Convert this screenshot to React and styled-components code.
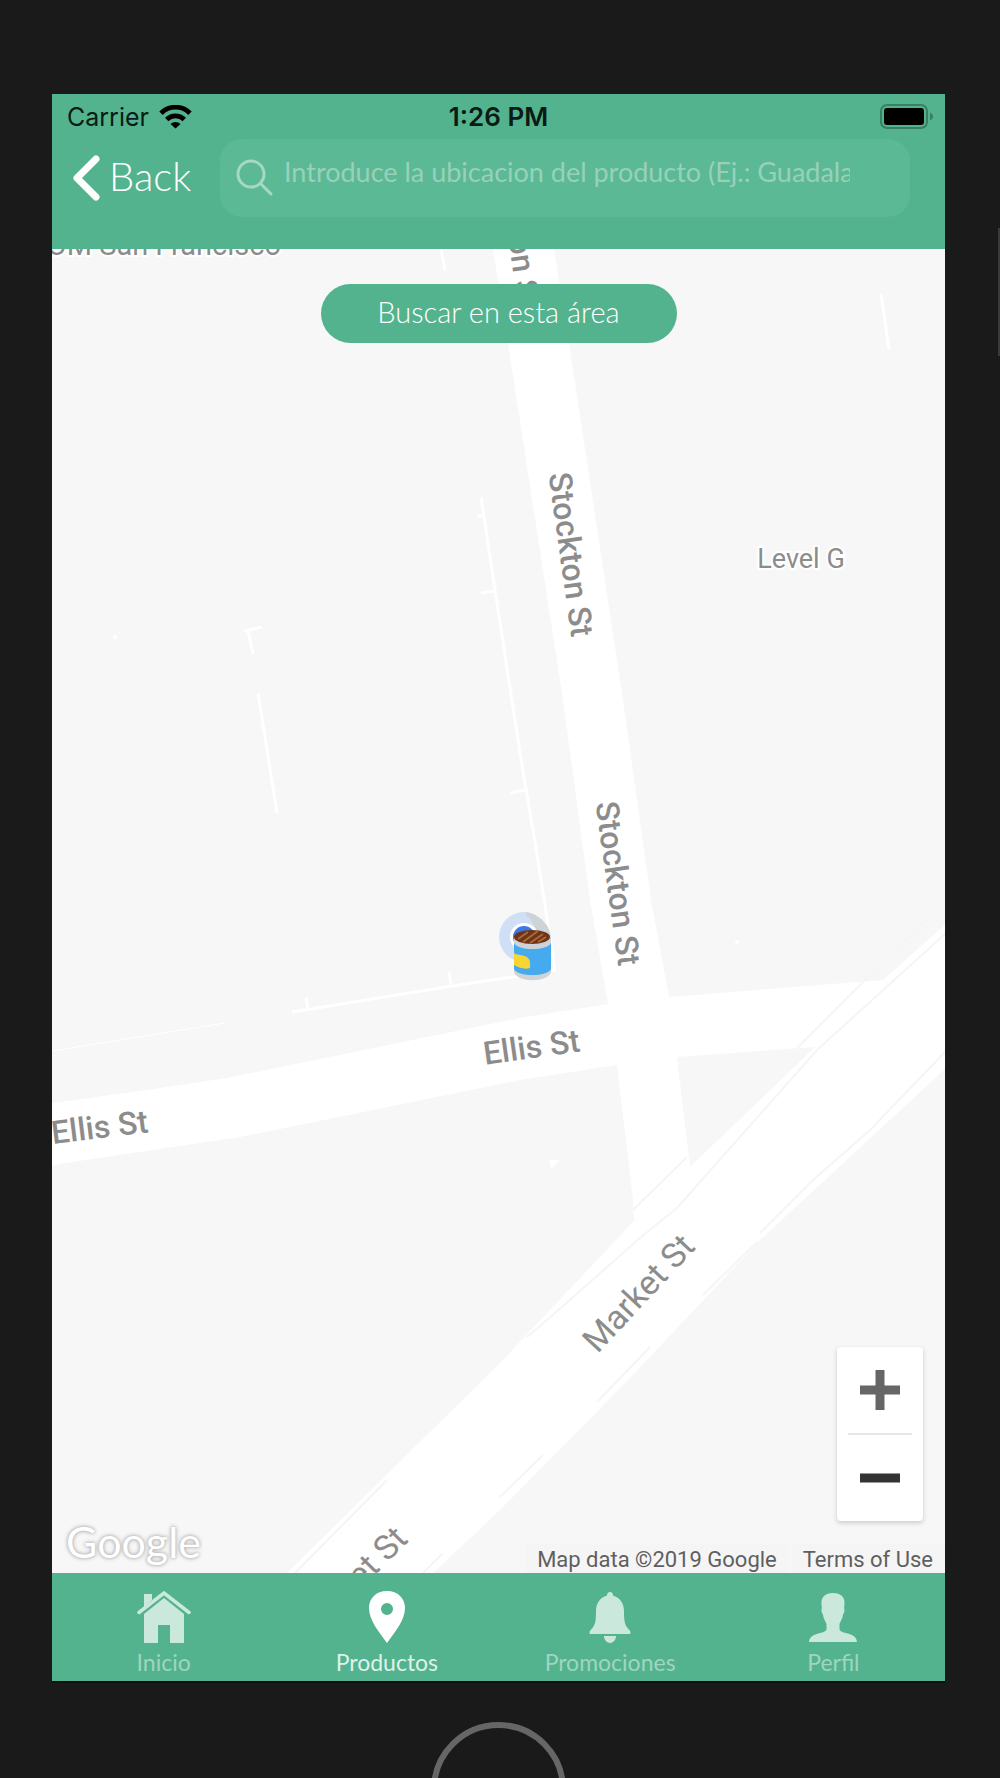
import React, { useState } from 'react';
import styled, { createGlobalStyle, ThemeProvider } from 'styled-components';

const theme = {
  colors: {
    primary: '#52b38e',
    field: '#5cb995',
    placeholder: '#98d1bb',
    soft: '#cbe8dc',
    muted: '#a0d5c0',
    bezel: '#1a1a1a',
    land: '#f7f7f7',
    label: '#8c8c8c',
  },
  fonts: {
    app: 'Lato, "Open Sans", sans-serif',
    system: 'Inter, "Liberation Sans", sans-serif',
    map: 'Roboto, "Liberation Sans", sans-serif',
  },
};

const TABS = [
  { id: 'inicio', label: 'Inicio', icon: HomeIcon },
  { id: 'productos', label: 'Productos', icon: PinIcon },
  { id: 'promociones', label: 'Promociones', icon: BellIcon },
  { id: 'perfil', label: 'Perfil', icon: PersonIcon },
];

function HomeIcon() {
  return (
    <svg width="54" height="54" viewBox="0 0 54 54" fill="currentColor">
      <path d="M2 22.500 27 3l25 19.500" fill="none" stroke="currentColor" strokeWidth="3.500" strokeLinecap="round" />
      <path d="M7 4h8v6l-8 7z" />
      <path d="M27 8 47 24v29H33V35H21v18H7V24z" />
    </svg>
  );
}

function PinIcon() {
  return (
    <svg width="54" height="54" viewBox="0 0 54 54" fill="currentColor">
      <path
        fillRule="evenodd"
        d="M27 1C16 1 9 8.500 9 18c0 12 10 24 18 35 8-11 18-23 18-35C45 8.500 38 1 27 1zm0 12a6 6 0 1 1 0 12 6 6 0 0 1 0-12z"
      />
    </svg>
  );
}

function BellIcon() {
  return (
    <svg width="54" height="54" viewBox="0 0 54 54" fill="currentColor">
      <path d="M27 2c2 0 3 1.500 3 3.500 7 2 11 8 11 15.500 0 11 1 14 4 17.500 1.500 1.700 2.500 2.500 2.500 4 0 1-.5 1.500-1.500 1.500H8c-1 0-1.500-.5-1.500-1.500 0-1.500 1-2.300 2.500-4 3-3.500 4-6.500 4-17.500C13 13.500 17 7.500 24 5.500 24 3.500 25 2 27 2z" />
      <path d="M21 46h12c0 4-3 7-6 7s-6-3-6-7z" />
    </svg>
  );
}

function PersonIcon() {
  return (
    <svg width="54" height="54" viewBox="0 0 54 54" fill="currentColor">
      <path d="M27 3c8 0 12 4 11.500 11 0 2-.3 3-.5 4 1 1 .5 5-1 6.500-.5 5-3.500 8-3.500 10v5c1 3 6 3 11 5 4 1.500 6 3.500 6.500 7.500H3c.5-4 2.500-6 6.500-7.500 5-2 10-2 11-5v-5c0-2-3-5-3.500-10-1.500-1.500-2-5.500-1-6.500-.2-1-.5-2-.5-4C15 7 19 3 27 3z" />
    </svg>
  );
}

function WifiIcon() {
  return (
    <svg width="33" height="24" viewBox="0 0 33 24" fill="none" stroke="#000" strokeWidth="4.800">
      <path d="M2 8.200a20.500 20.500 0 0 1 29 0" />
      <path d="M7.700 14.500a12.500 12.500 0 0 1 17.600 0" />
      <path d="M16.500 23.500l-5-4.500a7.200 7.200 0 0 1 10 0z" fill="#000" stroke="none" />
    </svg>
  );
}

function BatteryIcon() {
  return (
    <svg width="54" height="25" viewBox="0 0 54 25">
      <rect x="1" y="1" width="46" height="23" rx="6" fill="none" stroke="#3a8065" strokeWidth="2" />
      <rect x="4" y="4" width="40" height="17" rx="3" fill="#000" />
      <path d="M50 8.500c4 1.500 4 6.500 0 8z" fill="#3a8065" />
    </svg>
  );
}

function MapDrawing() {
  return (
    <MapSvg viewBox="52 249 893 1324" preserveAspectRatio="xMidYMid slice">
      {/* streets */}
      <g fill="#fff">
        <path d="M493 249H554L569 343 623 700 651 900 669 997 677 1057 690 1167 634 1221 633 1200 617 1065 608 1004 590 900 563 700 508 343z" />
        <path d="M52 1103L140 1091 227 1078 520 1018 608 1004 669 997 883 980 945 925V1040L815 1047 677 1057 617 1065 520 1080 427 1099 240 1137 52 1165z" />
        <path d="M945 925V1069L760 1240 630 1378 500 1510 433 1573H287L500 1363 634 1221 690 1167 815 1047 883 980z" />
      </g>
      {/* kerb lines */}
      <g fill="none" stroke="#f5f5f5" strokeWidth="2">
        <path d="M945 934L817 1050 677 1208 640 1238 547 1320 527 1337" />
        <path d="M938 908L862 983 797 1048M687 1157L633 1210" />
        <path d="M945 1052L870 1130 813 1180 760 1233M757 1242L703 1295M650 1347L597 1402M543 1455L500 1497M443 1553L423 1573" />
        <path d="M387 1480L295 1573" />
      </g>
      {/* building outlines */}
      <g fill="none" stroke="#fff" strokeWidth="3">
        <path d="M481 497L495 590 520 753 538 860 555 970 512 977 440 988 292 1012" />
        <path d="M477 516h7M481 593l14-2M510 793l15-3M449 972l2 13M306 997l2 12" />
        <path d="M244 631l18-4M248 631l5 23M258 693l19 120" />
        <path d="M881 294l8 55M441 249l4 22" />
        <path d="M52 1051l173-28" strokeWidth="1" />
      </g>
      <path d="M549 1160l11 0-9 9z" fill="#fff" />
      <circle cx="115" cy="637" r="2" fill="#fff" />
      <circle cx="737" cy="942" r="2" fill="#fff" />

      <StreetName x="281" y="255" fontSize="29" weight={400} anchor="end">OM San Francisco</StreetName>
      <StreetName transform="translate(507 229) rotate(82)">Stockton St</StreetName>
      <StreetName transform="translate(560 556) rotate(82)">Stockton St</StreetName>
      <StreetName transform="translate(607 885) rotate(82)">Stockton St</StreetName>
      <StreetName transform="translate(533 1058) rotate(-8)">Ellis St</StreetName>
      <StreetName transform="translate(101 1138) rotate(-7)">Ellis St</StreetName>
      <StreetName transform="translate(647 1301) rotate(-47)" fontSize="34" weight={400}>Market St</StreetName>
      <StreetName transform="translate(358 1592) rotate(-45)" fontSize="34" weight={400}>Market St</StreetName>
      <StreetName x="801" y="568" fontSize="27" weight={400}>Level G</StreetName>

      {/* current position */}
      <circle cx="524" cy="937" r="25" fill="#cfdff6" />
      <circle cx="524" cy="937" r="14" fill="#fff" />
      <circle cx="524" cy="937" r="11" fill="#3b78e7" />

      {/* product can */}
      <path d="M526 912c12 2 25 13 25 26l-9 2-12-22c-3-1-5-4-4-6z" fill="#ced3d6" />
      <path d="M514 938v34c3 11 34 11 37 0v-34z" fill="#cdd3d7" />
      <path d="M514 943v26c4 8 33 8 37 0v-26c-4 8-33 8-37 0z" fill="#45abee" />
      <path d="M514 953c4 3 10 1 14 5 3 3 2 8 2 10-6 2-12-1-16-3z" fill="#f8d533" />
      <ellipse cx="532" cy="937" rx="18" ry="7" fill="#6f3417" />
      <path d="M518 939l10-7M523 942l15-11M530 943l13-9M538 942l8-5" stroke="#a8693c" strokeWidth="2" />
    </MapSvg>
  );
}

const App = () => {
  const [tab, setTab] = useState('productos');
  const [query, setQuery] = useState('');

  return (
    <ThemeProvider theme={theme}>
      <GlobalStyle />
      <Phone>
        <Screen>
          <Header>
            <StatusBar>
              <Carrier>Carrier <WifiIcon /></Carrier>
              <Clock>1:26 PM</Clock>
              <Battery><BatteryIcon /></Battery>
            </StatusBar>
            <SearchRow>
              <BackButton>
                <svg width="28" height="48" viewBox="0 0 28 48" fill="none" stroke="currentColor" strokeWidth="7" strokeLinecap="round" strokeLinejoin="round">
                  <path d="M24 5 5 24l19 19" />
                </svg>
                <span>Back</span>
              </BackButton>
              <SearchField>
                <svg width="38" height="38" viewBox="0 0 38 38" fill="none" stroke="currentColor" strokeWidth="3" strokeLinecap="round">
                  <circle cx="15" cy="15" r="13" />
                  <path d="M25 25l10 10" />
                </svg>
                <SearchInput
                  type="text"
                  aria-label="Ubicacion"
                  placeholder="Introduce la ubicacion del producto (Ej.: Guadalajara)"
                  value={query}
                  onChange={e => setQuery(e.target.value)}
                />
              </SearchField>
            </SearchRow>
          </Header>

          <MapArea>
            <MapDrawing />
            <AreaButton>Buscar en esta área</AreaButton>
            <ZoomControl>
              <ZoomButton aria-label="+" $tone="#666">
                <svg width="40" height="40" viewBox="0 0 40 40" stroke="currentColor" strokeWidth="9">
                  <path d="M0 20h40M20 0v40" />
                </svg>
              </ZoomButton>
              <ZoomDivider />
              <ZoomButton aria-label="-" $tone="#333">
                <svg width="40" height="40" viewBox="0 0 40 40" stroke="currentColor" strokeWidth="9">
                  <path d="M0 20h40" />
                </svg>
              </ZoomButton>
            </ZoomControl>
            <MapFooter>
              <GoogleMark>Google</GoogleMark>
              <Credits>
                <span>Map data ©2019 Google</span>
                <a href="#terms">Terms of Use</a>
              </Credits>
            </MapFooter>
          </MapArea>

          <TabBar>
            {TABS.map(({ id, label, icon: Icon }) => (
              <TabButton key={id} $active={tab === id} onClick={() => setTab(id)}>
                <Icon />
                <span>{label}</span>
              </TabButton>
            ))}
          </TabBar>
        </Screen>
        <Chin>
          <HomeButton aria-label="Home" />
        </Chin>
      </Phone>
    </ThemeProvider>
  );
};

export default App;

// Map label, centred on its own point so it can be rotated in place
const StreetName = ({ weight = 500, anchor = 'middle', fontSize = 32, children, ...rest }) => (
  <MapText fontSize={fontSize} fontWeight={weight} textAnchor={anchor} {...rest}>
    {children}
  </MapText>
);

// Styled Components
const GlobalStyle = createGlobalStyle`
  * {
    box-sizing: border-box;
  }

  body {
    margin: 0;
    background: ${({ theme }) => theme.colors.bezel};
  }

  button, input {
    font: inherit;
    color: inherit;
    border: 0;
    margin: 0;
    padding: 0;
    background: none;
  }

  button {
    cursor: pointer;
  }

  svg {
    display: block;
    flex: none;
  }
`;

const Phone = styled.div`
  position: relative;
  display: flex;
  flex-direction: column;
  height: 100vh;
  min-height: 900px;
  padding: 94px 55px 0 52px;
  overflow: hidden;
  background: ${({ theme }) => theme.colors.bezel};
  font-family: ${({ theme }) => theme.fonts.app};

  &::after {
    content: '';
    position: absolute;
    top: 228px;
    right: 0;
    width: 2px;
    height: 128px;
    background: #3a3a3a;
  }
`;

const Screen = styled.div`
  flex: 1;
  display: flex;
  flex-direction: column;
  box-shadow: 0 2px 0 #0c120f;
`;

const Header = styled.header`
  padding-bottom: 32px;
  background: ${({ theme }) => theme.colors.primary};
`;

const StatusBar = styled.div`
  display: grid;
  grid-template-columns: 1fr auto 1fr;
  align-items: center;
  height: 45px;
  padding: 0 11px;
  font-family: ${({ theme }) => theme.fonts.system};
  font-size: 25px;
  color: #0b1a14;
`;

const Carrier = styled.div`
  display: flex;
  align-items: center;
  gap: 10px;
  padding-left: 4px;
`;

const Clock = styled.div`
  font-size: 26px;
  font-weight: 600;
`;

const Battery = styled.div`
  justify-self: end;
`;

const SearchRow = styled.div`
  display: flex;
  align-items: center;
  gap: 28px;
  padding: 0 35px 0 20px;
`;

const BackButton = styled.button`
  display: flex;
  align-items: center;
  gap: 9px;
  width: 120px;
  color: #fff;

  span {
    padding-bottom: 4px;
    font-size: 40px;
    font-weight: 300;
    line-height: 44px;
  }
`;

const SearchField = styled.label`
  flex: 1;
  min-width: 0;
  display: flex;
  align-items: center;
  gap: 10px;
  height: 78px;
  padding: 0 60px 0 16px;
  border-radius: 22px;
  background: ${({ theme }) => theme.colors.field};
  color: #a6d8c5;
`;

const SearchInput = styled.input`
  flex: 1;
  min-width: 0;
  height: 78px;
  padding-bottom: 14px;
  font-size: 27px;
  color: #fff;
  outline: none;

  &::placeholder {
    color: ${({ theme }) => theme.colors.placeholder};
    opacity: 1;
  }
`;

const MapArea = styled.main`
  position: relative;
  flex: 1;
  min-height: 0;
  display: flex;
  flex-direction: column;
  align-items: center;
  padding-top: 35px;
  overflow: hidden;
  background: ${({ theme }) => theme.colors.land};
`;

const MapSvg = styled.svg`
  position: absolute;
  inset: 0;
  width: 100%;
  height: 100%;
`;

const MapText = styled.text`
  font-family: ${({ theme }) => theme.fonts.map};
  fill: ${({ theme }) => theme.colors.label};
  stroke: #fff;
  stroke-width: 4px;
  paint-order: stroke;
`;

const AreaButton = styled.button`
  position: relative;
  width: 356px;
  height: 59px;
  padding-bottom: 4px;
  border-radius: 30px;
  background: ${({ theme }) => theme.colors.primary};
  color: #fff;
  font-size: 29px;
  font-weight: 300;
`;

const ZoomControl = styled.div`
  position: relative;
  align-self: flex-end;
  display: flex;
  flex-direction: column;
  align-items: center;
  width: 86px;
  margin: auto 22px 0 0;
  border-radius: 4px;
  background: #fff;
  box-shadow: 0 2px 5px rgba(0, 0, 0, 0.18);
`;

const ZoomButton = styled.button`
  display: flex;
  align-items: center;
  justify-content: center;
  width: 86px;
  height: 86px;
  color: ${({ $tone }) => $tone};
`;

const ZoomDivider = styled.div`
  width: 64px;
  height: 2px;
  background: #e6e6e6;
`;

const MapFooter = styled.div`
  position: relative;
  align-self: stretch;
  display: flex;
  align-items: flex-end;
  justify-content: space-between;
  height: 52px;
`;

const GoogleMark = styled.div`
  padding: 0 0 4px 14px;
  font-size: 43px;
  line-height: 54px;
  color: #fff;
  text-shadow: 0 0 3px #aaa, 0 0 5px #bbb;
`;

const Credits = styled.div`
  display: flex;
  gap: 2px;
  font-family: ${({ theme }) => theme.fonts.map};
  font-size: 22px;
  line-height: 26px;
  color: #5f5f5f;

  span, a {
    padding: 4px 12px 0;
    background: #f5f5f5;
    color: inherit;
    text-decoration: none;
  }
`;

const TabBar = styled.nav`
  display: grid;
  grid-template-columns: repeat(4, 1fr);
  height: 108px;
  background: ${({ theme }) => theme.colors.primary};
`;

const TabButton = styled.button`
  display: flex;
  flex-direction: column;
  align-items: center;
  gap: 4px;
  padding-top: 17px;
  color: ${({ $active, theme }) => ($active ? '#fff' : theme.colors.soft)};

  span {
    font-size: 23px;
    line-height: 28px;
    color: ${({ $active, theme }) => ($active ? '#dff2ea' : theme.colors.muted)};
  }
`;

const Chin = styled.div`
  display: flex;
  justify-content: center;
  align-items: flex-start;
  height: 97px;
  padding-top: 41px;
`;

const HomeButton = styled.button`
  flex: none;
  width: 135px;
  height: 135px;
  border: 6px solid #666;
  border-radius: 50%;
`;
